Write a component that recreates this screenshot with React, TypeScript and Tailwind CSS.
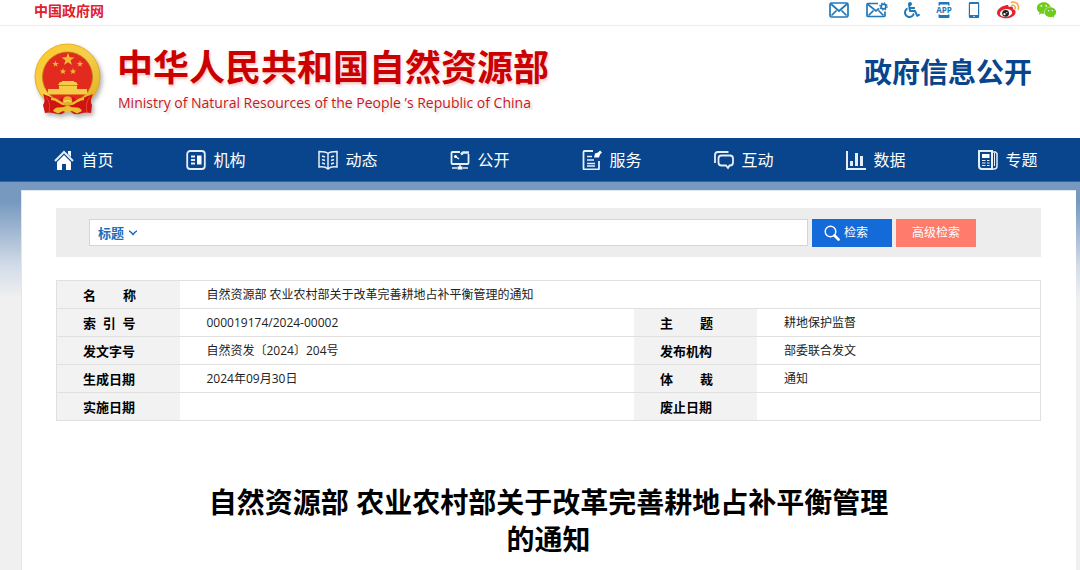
import { FaWheelchair, FaWeixin } from 'react-icons/fa';
import type { ReactNode } from 'react';

type Row = {
  label: string;
  value: string;
  label2?: string;
  value2?: string;
};

const GAP = '\u00a0'.repeat(8);

const rows: Row[] = [
  { label: `名${GAP}称`, value: '自然资源部 农业农村部关于改革完善耕地占补平衡管理的通知' },
  { label: '索\u00a0\u00a0引\u00a0\u00a0号', value: '000019174/2024-00002', label2: `主${GAP}题`, value2: '耕地保护监督' },
  { label: '发文字号', value: '自然资发〔2024〕204号', label2: '发布机构', value2: '部委联合发文' },
  { label: '生成日期', value: '2024年09月30日', label2: `体${GAP}裁`, value2: '通知' },
  { label: '实施日期', value: '', label2: '废止日期', value2: '' },
];

const NavSvg = ({ children }: { children: ReactNode }) => (
  <svg viewBox="0 0 20 20" className="size-5 shrink-0" fill="none" stroke="#e6eef8" strokeWidth="1.5" aria-hidden="true">
    {children}
  </svg>
);

const navItems = [
  {
    name: '首页',
    icon: (
      <NavSvg>
        <path d="M1 11 10 2l9 9" strokeWidth="2" />
        <path d="M14 1h3v6l-3-3z" fill="#fff" stroke="none" />
        <path d="M10 5l7 7v8h-5v-6H8v6H3v-8z" fill="#fff" stroke="none" />
      </NavSvg>
    ),
  },
  {
    name: '机构',
    icon: (
      <NavSvg>
        <rect x="1.2" y="1" width="17.6" height="18" rx="3" strokeWidth="1.8" />
        <path d="M5 6.5h4M5 10h4M5 13.5h4" strokeWidth="1.8" />
        <rect x="11" y="5.5" width="4.5" height="9" fill="#fff" stroke="none" />
      </NavSvg>
    ),
  },
  {
    name: '动态',
    icon: (
      <NavSvg>
        <path d="M10 3.500C8 1.500 4 1.500 1 1.500v15.500c4-.5 7 0 9 2 2-2 5-2.500 9-2V1.500c-3 0-7 0-9 2zM10 3.500v15" />
        <path d="M4 6l3 1M4 9.500l3 1M4 13l3 1M16 6l-3 1M16 9.500l-3 1M16 13l-3 1" strokeWidth="1.700" />
      </NavSvg>
    ),
  },
  {
    name: '公开',
    icon: (
      <NavSvg>
        <path d="M10 2H2.500Q1.500 2 1.500 3v10q0 1 1 1h15q1 0 1-1V4" strokeWidth="1.800" />
        <path d="M11 4.500l2-2h6" strokeWidth="2.500" />
        <path d="M5 6l4 3" />
        <circle cx="5.500" cy="6.500" r="1.500" fill="#fff" stroke="none" />
        <path d="M10 14v3M2 18h5M13 18h5" />
        <rect x="7.500" y="16.500" width="5" height="3" fill="#fff" stroke="none" />
      </NavSvg>
    ),
  },
  {
    name: '服务',
    icon: (
      <NavSvg>
        <path d="M11 1H2.500q-1 0-1 1v16.500q0 1 1 1H16q1 0 1-1V11" strokeWidth="1.800" />
        <path d="M5 6.500h5M5 10h7M5 13.500h8M5 16h8" strokeWidth="1.300" />
        <path d="M12 7.500l1-4 3-1 2-2 2 2-2 2-1 3z" fill="#fff" stroke="none" />
      </NavSvg>
    ),
  },
  {
    name: '互动',
    icon: (
      <NavSvg>
        <path d="M1 13V5q0-3 3-3h10.500" strokeWidth="1.800" />
        <path d="M7.500 5.500h8.500q3 0 3 3v4q0 3-3 3h-.500L14 18l-2-2.500H7.500q-3 0-3-3v-4q0-3 3-3z" strokeWidth="1.800" />
      </NavSvg>
    ),
  },
  {
    name: '数据',
    icon: (
      <NavSvg>
        <path d="M1 1v18h19" strokeWidth="2" />
        <path d="M5.500 16V11M10.500 16V3M15.500 16V6" strokeWidth="3" />
      </NavSvg>
    ),
  },
  {
    name: '专题',
    icon: (
      <NavSvg>
        <path d="M1 1h13v18H4q-3 0-3-3z" strokeWidth="2" />
        <path d="M14 2h3.500l1.500 1.500V16q0 3-3 3h-2" />
        <path d="M16.500 3v13" strokeWidth="1" />
        <rect x="4" y="4" width="7.500" height="4" fill="#fff" stroke="none" />
        <path d="M4 10.500h3.500M9 10.500h2.500M4 13h3.500M9 13h2.500M4 15.500h3.500M9 15.500h2.500" strokeWidth="1.200" />
      </NavSvg>
    ),
  },
];

const STAR = 'M0-5 1.200-1.600 4.800-1.500 1.900.600 2.900 4 0 2-2.900 4-1.900.600-4.800-1.500-1.200-1.600z';

const Emblem = () => (
  <svg viewBox="0 0 68 74" className="h-[74px] w-[68px] shrink-0 drop-shadow-[2px_3px_2px_rgba(0,0,0,0.3)]" role="img" aria-label="国徽">
    <defs>
      <linearGradient id="gold" x1="0" y1="0" x2="1" y2="1">
        <stop offset="0" stopColor="#ffc928" />
        <stop offset="0.5" stopColor="#f5cf4a" />
        <stop offset="1" stopColor="#dfa91c" />
      </linearGradient>
    </defs>
    <circle cx="33.500" cy="33.500" r="32.500" fill="url(#gold)" stroke="#dca51b" strokeWidth="0.800" />
    <circle cx="33.500" cy="34" r="25" fill="#e32a1f" stroke="#b8781c" strokeWidth="0.800" />
    <g fill="#efbb35">
      <path d={STAR} transform="translate(34 16.500) scale(1.350)" />
      <path d={STAR} transform="translate(21.500 21) scale(.680)" />
      <path d={STAR} transform="translate(46 21) scale(.680)" />
      <path d={STAR} transform="translate(29 28.500) scale(.680)" />
      <path d={STAR} transform="translate(39 28.500) scale(.680)" />
    </g>
    <g fill="#f6cb45">
      <path d="M24 42l2-3h2v-1h12v1h2l2 3z" />
      <path d="M25 42.500h18v3.500H25zM14 46h39v4h2l-4 1.500H16L12 50h2z" />
    </g>
    <path d="M9 51c5 2 10 3 14 8l6-5 5 3 5-3 6 5c4-5 9-6 14-8-2 5-3 8-1 11l-1 8c-7-2-11 2-17 1l-6-4-6 4c-6 1-11-3-17-1l-2-8c2-3 2-6 0-11z" fill="#cf1511" />
    <path d="M12 54c4 4 4 10 3 15M56 54c-4 4-4 10-3 15" fill="none" stroke="#ef4035" strokeWidth="1" />
    <path d="M17 56c7-1 8 5 13 5h7c5 0 6-6 13-5" fill="none" stroke="#edbd32" strokeWidth="2.500" />
    <circle cx="33.500" cy="58" r="4.800" fill="#e6ae28" />
    <path d="M30 59q3.500-3 7 0" fill="none" stroke="#f8dc6c" strokeWidth="1.500" />
    <path d="M19 68c2-5 7-3 10.500-4l4-1.500 4 1.500c3.500 1 8.500-1 10.500 4l-5 2.500-5-2.500-4.500 2-4.500-2-5 2.500z" fill="#edbd32" />
  </svg>
);

const WeiboIcon = () => (
  <svg viewBox="0 0 23 18" className="h-[18px] w-[23px]" aria-hidden="true">
    <path d="M8.500 4.500c2-1 3.500-.5 3 1.500 3-1.200 5.300-.4 4.500 2 2 .7 3 2 2.500 4-.8 3.200-5 5.300-9.500 5.300-5 0-9-2.300-9-5.500C0 8.500 5 4.500 8.500 4.500z" fill="#e6232c" />
    <ellipse cx="9" cy="12" rx="6.200" ry="3.900" fill="#fff" transform="rotate(-8 9 12)" />
    <circle cx="8.600" cy="12.300" r="3.400" fill="#222" />
    <circle cx="7.500" cy="13.200" r="1.100" fill="#fff" />
    <circle cx="9.800" cy="11.700" r=".6" fill="#fff" />
    <path d="M14.500 1.200c4.500-1 8 2.500 6.700 7M15 4.300c2.300-.3 3.700 1.200 3.200 3.300" fill="none" stroke="#f9a94a" strokeWidth="1.600" strokeLinecap="round" />
  </svg>
);

const TopIcons = () => (
  <ul className="flex items-center text-[#2078b8]">
    <li className="w-[37px]">
      <a href="#" aria-label="邮箱" className="block">
        <svg viewBox="0 0 20 16" className="h-4 w-5" fill="none" stroke="currentColor" strokeWidth="1.700">
          <rect x="1" y="1" width="18" height="14" rx="1.500" />
          <path d="M2 2l8 7 8-7M2.500 13.500l5-5M17.500 13.500l-5-5" />
        </svg>
      </a>
    </li>
    <li className="w-[38px]">
      <a href="#" aria-label="邮件订阅" className="block">
        <svg viewBox="0 0 22 16" className="h-4 w-[22px]" fill="none" stroke="currentColor" strokeWidth="1.700">
          <path d="M12 1.500H2q-1 0-1 1v11q0 1 1 1h16q1 0 1-1V9.500" />
          <path d="M2 2.500l8 6.500 3-2.500M2.500 13.500l5-5M17.500 13.500l-5-5" />
          <circle cx="17.500" cy="4.500" r="2.400" />
          <circle cx="17.500" cy="4.500" r="3.600" strokeDasharray="1.400 1.430" strokeWidth="1.300" />
        </svg>
      </a>
    </li>
    <li className="w-8">
      <a href="#" aria-label="无障碍" className="block">
        <FaWheelchair className="h-[18px] w-4" />
      </a>
    </li>
    <li className="w-8">
      <a href="#" aria-label="客户端" className="block">
        <svg viewBox="0 0 16 18" className="h-[18px] w-4 overflow-visible">
          <path d="M2.500 4.500V2q0-1 1-1h9q1 0 1 1v2.500H12V3.500H4v1zM2.500 13.500V16q0 1 1 1h9q1 0 1-1v-2.500H12v.5H4v-.5z" fill="currentColor" />
          <text x="8" y="12" textAnchor="middle" fontSize="8" fontWeight="700" fill="currentColor">APP</text>
        </svg>
      </a>
    </li>
    <li className="w-[29px]">
      <a href="#" aria-label="手机版" className="block">
        <svg viewBox="0 0 12 18" className="h-[18px] w-3">
          <path d="M2 1h8q1.200 0 1.200 1.200v13.600Q11.200 17 10 17H2Q.8 17 .8 15.800V2.200Q.8 1 2 1zm0 2v11h8V3z" fill="currentColor" fillRule="evenodd" />
          <circle cx="6" cy="15.500" r=".7" fill="#fff" />
        </svg>
      </a>
    </li>
    <li className="w-[39px]">
      <a href="#" aria-label="微博" className="block"><WeiboIcon /></a>
    </li>
    <li>
      <a href="#" aria-label="微信" className="block text-[#6fcb1c]">
        <FaWeixin className="h-[18px] w-[21px]" />
      </a>
    </li>
  </ul>
);

const SearchBar = () => (
  <form className="flex items-start bg-[#ededed] pt-[11px] pr-[65px] pb-[10px] pl-[33px]">
    <div className="flex h-[27px] flex-1 items-center border border-[#d5d5d5] bg-white">
      <div className="relative flex items-center">
        <select aria-label="检索范围" className="w-[52px] appearance-none bg-transparent pl-2 text-[13px] leading-5 font-bold text-[#1a6ebd] outline-none">
          <option>标题</option>
        </select>
        <svg viewBox="0 0 10 6" className="pointer-events-none absolute right-1 h-[6px] w-[10px]" fill="none" stroke="#1a6ebd" strokeWidth="1.500">
          <path d="M1 1q1 0 4 3.500Q8 1 9 1" />
        </svg>
      </div>
      <input type="text" aria-label="检索词" className="h-full min-w-0 flex-1 px-2 text-xs outline-none" />
    </div>
    <button type="button" className="ml-1 flex h-7 w-20 items-center gap-1 bg-[#146ad8] pl-3 text-xs text-white">
      <svg viewBox="0 0 16 16" className="size-4" fill="none" stroke="#fff" aria-hidden="true">
        <circle cx="6.500" cy="6.500" r="5.300" strokeWidth="1.400" />
        <path d="M10.500 10.500l4 4" strokeWidth="2.600" strokeLinecap="round" />
      </svg>
      检索
    </button>
    <button type="button" className="ml-1 h-7 w-20 bg-[#ff7b6b] text-xs text-white">高级检索</button>
  </form>
);

const InfoTable = () => (
  <table className="mt-[23px] w-full table-fixed border-collapse border border-[#e0e0e0] text-left">
    <colgroup>
      <col className="w-[123px]" />
      <col className="w-[46.2%]" />
      <col className="w-[123px]" />
      <col />
    </colgroup>
    <tbody>
      {rows.map((row) => (
        <tr key={row.label} className="h-7 border-b border-[#e0e0e0]">
          <th scope="row" className="bg-[#f2f2f2] pl-[26px] text-[13px] leading-5 font-bold">{row.label}</th>
          <td colSpan={row.label2 ? 1 : 3} className="pl-[27px] text-xs leading-5 text-[#222]">{row.value}</td>
          {row.label2 && (
            <>
              <th scope="row" className="bg-[#f2f2f2] pl-[26px] text-[13px] leading-5 font-bold">{row.label2}</th>
              <td className="pl-[27px] text-xs leading-5 text-[#222]">{row.value2}</td>
            </>
          )}
        </tr>
      ))}
    </tbody>
  </table>
);

const App = () => {
  return (
    <div className="flex min-h-screen flex-col bg-white font-['Open_Sans','Noto_Sans_CJK_SC',sans-serif] text-black">
      <div className="flex h-[26px] items-start justify-between border-b border-[#ececec] pr-[23px] pl-[34px]">
        <a href="#" className="pt-px text-sm leading-5 font-bold text-[#e0202c]">中国政府网</a>
        <div className="pt-px"><TopIcons /></div>
      </div>

      <header className="flex h-28 justify-between pr-12 pl-[34px]">
        <div className="flex pt-[17px]">
          <Emblem />
          <div className="ml-[15px] pt-[3px]">
            <h1 className="text-[36px] leading-11 font-bold text-[#cb0000] [text-shadow:1px_2px_3px_rgba(220,60,60,0.3)]">中华人民共和国自然资源部</h1>
            <p className="pt-px pl-px text-sm leading-6 text-[#c8161d] [text-shadow:2px_2px_2px_rgba(0,0,0,0.15)]">Ministry of Natural Resources of the People ’s Republic of China</p>
          </div>
        </div>
        <p className="pt-[26px] text-[28px] leading-10 font-bold text-[#08458c]">政府信息公开</p>
      </header>

      <nav className="h-11 border-b border-[#2c63a4] bg-[#08458c] pr-[6px] pl-[18px]">
        <ul className="grid h-full grid-cols-8">
          {navItems.map((item) => (
            <li key={item.name} className="flex items-center justify-center">
              <a href="#" className="flex items-center gap-[7px] text-base leading-6 text-white">
                {item.icon}
                {item.name}
              </a>
            </li>
          ))}
        </ul>
      </nav>

      <div className="flex flex-1 flex-col bg-[#f0f0f0] bg-[linear-gradient(#7799c0_0px,#7799c0_20px,#d3dce8_84px,#f0f0f0_116px)] bg-no-repeat pt-2 pr-[4px] pl-[21px]">
        <main className="flex-1 border-t border-l border-[#dfe7f0] bg-white pt-[17px] pr-[35px] pl-[34px]">
          <SearchBar />
          <InfoTable />
          <h2 className="mx-auto mt-[63px] max-w-[690px] text-center text-[28px] leading-[37px] font-bold">
            自然资源部 农业农村部关于改革完善耕地占补平衡管理的通知
          </h2>
        </main>
      </div>
    </div>
  );
};

export default App;
